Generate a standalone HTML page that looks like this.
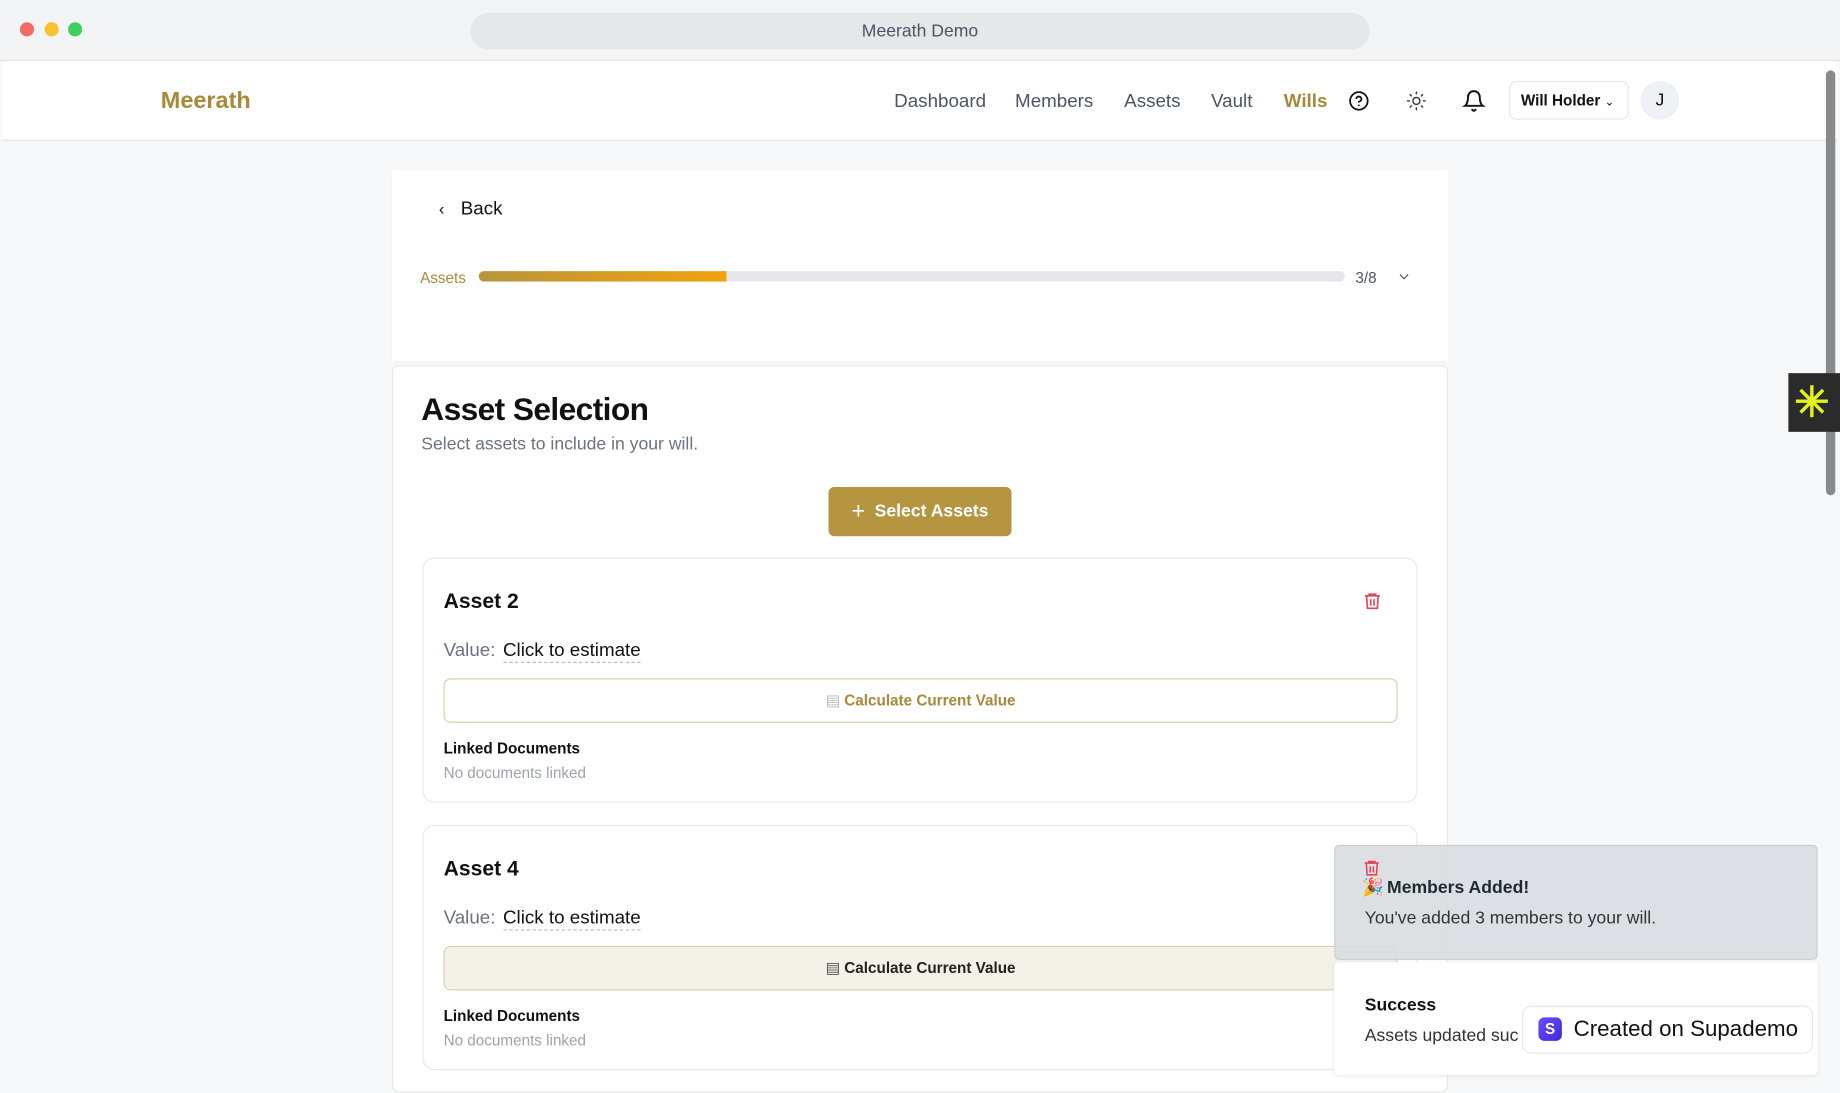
<!DOCTYPE html>
<html><head><meta charset="utf-8"><style>
*{box-sizing:border-box;margin:0;padding:0}
html,body{width:1840px;height:1080px;overflow:hidden;background:#f7f8fa;font-family:"Liberation Sans",Arial,sans-serif}
#w{position:absolute;left:0;top:0;width:1568px;height:920px;transform:scale(1.173469);transform-origin:0 0;background:#f7f8fa}
.a{position:absolute}
.nav{position:absolute;top:78px;font-size:16px;color:#4b5563}
.card{position:absolute;left:360px;width:848px;height:209px;background:#fff;border:1px solid #e7e8ea;border-radius:10px}
.card h3{position:absolute;left:17px;top:26px;font-size:18px;font-weight:bold;color:#111}
.val{position:absolute;left:17px;top:70px;font-size:16px;color:#6b7280}
.val b{font-weight:normal;color:#111;border-bottom:1px dashed #bbb;padding-bottom:1px;margin-left:2px}
.calc{position:absolute;left:17px;top:102px;width:813px;height:38px;border:1px solid #d9d0ab;border-radius:6px;text-align:center;font-size:13px;font-weight:bold;color:#a8893a;line-height:36px}
.ld{position:absolute;left:17px;top:154px;font-size:13px;font-weight:bold;color:#111}
.nd{position:absolute;left:17px;top:175px;font-size:13px;color:#9ca3af}
</style></head><body><div id="w">
<div class="a" style="left:0;top:0;width:1568px;height:52px;background:#f3f4f6;border-bottom:1px solid #e3e4e7"></div>
<div class="a" style="left:17px;top:19px;width:12px;height:12px;border-radius:6px;background:#f26a62"></div>
<div class="a" style="left:38px;top:19px;width:12px;height:12px;border-radius:6px;background:#f8c22e"></div>
<div class="a" style="left:58px;top:19px;width:12px;height:12px;border-radius:6px;background:#3ed05b"></div>
<div class="a" style="left:401px;top:11px;width:766px;height:31px;border-radius:15px;background:#e5e7eb;text-align:center;line-height:31px;font-size:15px;color:#4b5563">Meerath Demo</div>
<div class="a" style="left:2px;top:52px;width:1564px;height:68px;background:#fff;border-bottom:1px solid #e5e7eb"></div>
<div class="a" style="left:137px;top:75px;font-size:20px;font-weight:bold;color:#a8893a">Meerath</div>
<div class="nav" style="left:762px">Dashboard</div>
<div class="nav" style="left:865px">Members</div>
<div class="nav" style="left:958px">Assets</div>
<div class="nav" style="left:1032px">Vault</div>
<div class="nav" style="left:1094px;color:#a8893a;font-weight:bold">Wills</div>
<svg class="a" style="left:1149px;top:77px" width="18" height="18" viewBox="0 0 24 24" fill="none" stroke="#111" stroke-width="2" stroke-linecap="round"><circle cx="12" cy="12" r="10"/><path d="M9.1 9a3 3 0 0 1 5.8 1c0 2-3 3-3 3M12 17h.01"/></svg>
<svg class="a" style="left:1198px;top:77px" width="18" height="18" viewBox="0 0 24 24" fill="none" stroke="#333" stroke-width="1.6" stroke-linecap="round"><circle cx="12" cy="12" r="4"/><path d="M12 2v2M12 20v2M4.9 4.9l1.4 1.4M17.7 17.7l1.4 1.4M2 12h2M20 12h2M6.3 17.7l-1.4 1.4M19.1 4.9l-1.4 1.4"/></svg>
<svg class="a" style="left:1246px;top:76px" width="20" height="20" viewBox="0 0 24 24" fill="none" stroke="#111" stroke-width="2" stroke-linecap="round"><path d="M6 8a6 6 0 0 1 12 0c0 7 3 9 3 9H3s3-2 3-9M10.3 21a1.9 1.9 0 0 0 3.4 0"/></svg>
<div class="a" style="left:1286px;top:69px;width:102px;height:33px;border:1px solid #e5e7eb;border-radius:6px;background:#fff;font-size:13px;font-weight:bold;color:#111;line-height:31px;padding-left:9px">Will Holder <span style="font-weight:normal;font-size:10px">⌄</span></div>
<div class="a" style="left:1398px;top:69px;width:33px;height:33px;border-radius:17px;background:#eef2f7;text-align:center;line-height:33px;font-size:15px;color:#111">J</div>
<div class="a" style="left:1556px;top:60px;width:8px;height:362px;border-radius:4px;background:#8a8a8a"></div>
<div class="a" style="left:334px;top:145px;width:900px;height:163px;background:#fff;box-shadow:0 1px 2px rgba(0,0,0,.06)"></div>
<div class="a" style="left:374px;top:170px;font-size:16px;color:#111"><span style="font-size:14px;margin-right:14px">‹</span>Back</div>
<div class="a" style="left:358px;top:229px;font-size:13px;color:#a8893a">Assets</div>
<div class="a" style="left:408px;top:231px;width:738px;height:9px;border-radius:5px;background:#e5e7eb;overflow:hidden"><div style="width:211px;height:9px;background:linear-gradient(90deg,#b8963e,#f0a30a)"></div></div>
<div class="a" style="left:1155px;top:229px;font-size:13px;color:#4b5563">3/8</div>
<svg class="a" style="left:1190px;top:230px" width="13" height="12" viewBox="0 0 24 24" fill="none" stroke="#555" stroke-width="2"><path d="M5 8l7 7 7-7"/></svg>
<div class="a" style="left:334px;top:311px;width:900px;height:620px;background:#fff;border:1px solid #e7e8ea;border-radius:6px"></div>
<div class="a" style="left:359px;top:334px;font-size:27px;font-weight:bold;color:#111;letter-spacing:-.5px">Asset Selection</div>
<div class="a" style="left:359px;top:370px;font-size:15px;color:#6b7280">Select assets to include in your will.</div>
<div class="a" style="left:706px;top:415px;width:156px;height:42px;border-radius:5px;background:#b5953f;color:#fff;font-size:15px;font-weight:bold;text-align:center;line-height:42px"><span style="font-size:20px;font-weight:normal;vertical-align:-2px;margin-right:8px">+</span>Select Assets</div>
<div class="card" style="top:475px"><h3>Asset 2</h3>
<svg class="a" style="left:800px;top:27px" width="17" height="18" viewBox="0 0 24 24" fill="none" stroke="#e0465a" stroke-width="2"><path d="M3 6h18M8 6V4h8v2M5 6l1 15h12l1-15M10 10v8M14 10v8"/></svg>
<div class="val">Value: <b>Click to estimate</b></div>
<div class="calc"><span style="font-weight:normal;color:#bbb">▤</span> Calculate Current Value</div>
<div class="ld">Linked Documents</div><div class="nd">No documents linked</div></div>
<div class="card" style="top:703px"><h3>Asset 4</h3>
<div class="val">Value: <b>Click to estimate</b></div>
<div class="calc" style="background:#f3f1e8;color:#222"><span style="font-weight:normal;color:#555">▤</span> Calculate Current Value</div>
<div class="ld">Linked Documents</div><div class="nd">No documents linked</div></div>
<div class="a" style="left:1137px;top:720px;width:412px;height:98px;background:rgba(215,219,222,.85);border:1px solid #c9cdd1;border-radius:4px"></div>
<svg class="a" style="left:1161px;top:731px" width="16" height="17" viewBox="0 0 24 24" fill="none" stroke="#e0465a" stroke-width="2"><path d="M3 6h18M8 6V4h8v2M5 6l1 15h12l1-15M10 10v8M14 10v8"/></svg>
<div class="a" style="left:1161px;top:747px;font-size:15px">🎉</div>
<div class="a" style="left:1182px;top:748px;font-size:15px;font-weight:bold;color:#1f2a30">Members Added!</div>
<div class="a" style="left:1163px;top:774px;font-size:15px;color:#333">You've added 3 members to your will.</div>
<div class="a" style="left:1137px;top:820px;width:412px;height:96px;background:#fff;border-radius:4px;box-shadow:0 1px 4px rgba(0,0,0,.08)"></div>
<div class="a" style="left:1163px;top:848px;font-size:15px;font-weight:bold;color:#111">Success</div>
<div class="a" style="left:1163px;top:874px;font-size:15px;color:#333">Assets updated suc</div>
<div class="a" style="left:1297px;top:857px;width:248px;height:41px;background:#fff;border:1px solid #e5e7eb;border-radius:8px"></div>
<div class="a" style="left:1311px;top:867px;width:20px;height:20px;border-radius:5px;background:linear-gradient(135deg,#6d4aff,#3b2bd8);color:#fff;font-size:13px;font-weight:bold;text-align:center;line-height:20px">S</div>
<div class="a" style="left:1341px;top:867px;font-size:19px;color:#111">Created on Supademo</div>
<div class="a" style="left:1524px;top:318px;width:44px;height:50px;background:#2b2b2b"></div>
<div class="a" style="left:1529px;top:322px;font-size:36px;font-weight:bold;color:#e4f21b">✳</div>
</div></body></html>
